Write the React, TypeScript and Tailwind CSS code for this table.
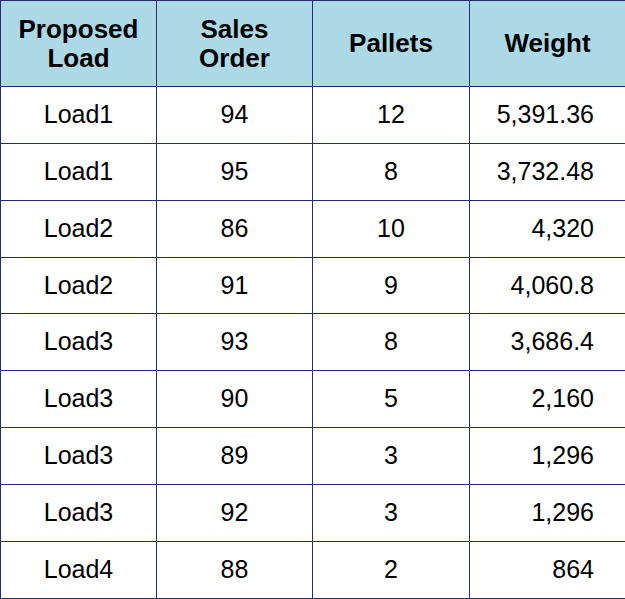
import React from 'react';

const rows = [
  { load: 'Load1', order: 94, pallets: 12, weight: '5,391.36' },
  { load: 'Load1', order: 95, pallets: 8, weight: '3,732.48' },
  { load: 'Load2', order: 86, pallets: 10, weight: '4,320' },
  { load: 'Load2', order: 91, pallets: 9, weight: '4,060.8', short: true },
  { load: 'Load3', order: 93, pallets: 8, weight: '3,686.4' },
  { load: 'Load3', order: 90, pallets: 5, weight: '2,160' },
  { load: 'Load3', order: 89, pallets: 3, weight: '1,296' },
  { load: 'Load3', order: 92, pallets: 3, weight: '1,296' },
  { load: 'Load4', order: 88, pallets: 2, weight: '864' },
];

export default function App() {
  return (
    <div className="w-[625px] h-[599px] bg-white font-['Liberation_Sans',Arial,sans-serif] text-black">
      <table className="w-[625px] border-collapse table-fixed text-[25px]">
        <colgroup>
          <col className="w-[156px]" />
          <col className="w-[156px]" />
          <col className="w-[157px]" />
          <col className="w-[156px]" />
        </colgroup>
        <thead>
          <tr className="h-[86px] bg-[#add8e6] text-[26px]">
            <th className="border border-[#23306b] font-bold leading-[29px] p-0">Proposed<br />Load</th>
            <th className="border border-[#23306b] font-bold leading-[29px] p-0">Sales<br />Order</th>
            <th className="border border-[#23306b] font-bold leading-[29px] p-0">Pallets</th>
            <th className="border border-[#23306b] font-bold leading-[29px] p-0">Weight</th>
          </tr>
        </thead>
        <tbody>
          {rows.map((r, i) => (
            <tr key={i} className={r.short ? 'h-[56px]' : 'h-[57px]'}>
              <td className="border border-[#23306b] text-center p-0">{r.load}</td>
              <td className="border border-[#23306b] text-center p-0">{r.order}</td>
              <td className="border border-[#23306b] text-center p-0">{r.pallets}</td>
              <td className="border border-[#23306b] text-right pr-[31px] p-0">{r.weight}</td>
            </tr>
          ))}
        </tbody>
      </table>
    </div>
  );
}
